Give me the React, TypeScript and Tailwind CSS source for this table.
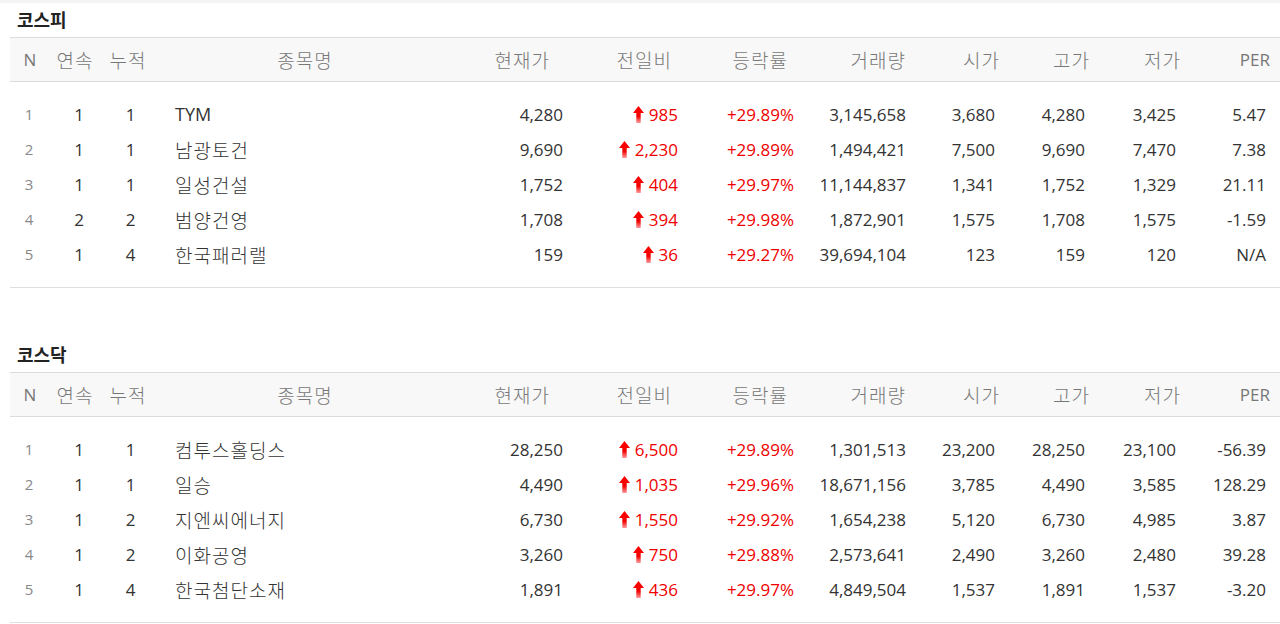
import React from "react";

type Row = {
  n: number;
  a: number;
  b: number;
  name: string;
  price: string;
  diff: string;
  rate: string;
  vol: string;
  open: string;
  high: string;
  low: string;
  per: string;
};

const kospi: Row[] = [
  { n: 1, a: 1, b: 1, name: "TYM", price: "4,280", diff: "985", rate: "+29.89%", vol: "3,145,658", open: "3,680", high: "4,280", low: "3,425", per: "5.47" },
  { n: 2, a: 1, b: 1, name: "남광토건", price: "9,690", diff: "2,230", rate: "+29.89%", vol: "1,494,421", open: "7,500", high: "9,690", low: "7,470", per: "7.38" },
  { n: 3, a: 1, b: 1, name: "일성건설", price: "1,752", diff: "404", rate: "+29.97%", vol: "11,144,837", open: "1,341", high: "1,752", low: "1,329", per: "21.11" },
  { n: 4, a: 2, b: 2, name: "범양건영", price: "1,708", diff: "394", rate: "+29.98%", vol: "1,872,901", open: "1,575", high: "1,708", low: "1,575", per: "-1.59" },
  { n: 5, a: 1, b: 4, name: "한국패러랠", price: "159", diff: "36", rate: "+29.27%", vol: "39,694,104", open: "123", high: "159", low: "120", per: "N/A" },
];

const kosdaq: Row[] = [
  { n: 1, a: 1, b: 1, name: "컴투스홀딩스", price: "28,250", diff: "6,500", rate: "+29.89%", vol: "1,301,513", open: "23,200", high: "28,250", low: "23,100", per: "-56.39" },
  { n: 2, a: 1, b: 1, name: "일승", price: "4,490", diff: "1,035", rate: "+29.96%", vol: "18,671,156", open: "3,785", high: "4,490", low: "3,585", per: "128.29" },
  { n: 3, a: 1, b: 2, name: "지엔씨에너지", price: "6,730", diff: "1,550", rate: "+29.92%", vol: "1,654,238", open: "5,120", high: "6,730", low: "4,985", per: "3.87" },
  { n: 4, a: 1, b: 2, name: "이화공영", price: "3,260", diff: "750", rate: "+29.88%", vol: "2,573,641", open: "2,490", high: "3,260", low: "2,480", per: "39.28" },
  { n: 5, a: 1, b: 4, name: "한국첨단소재", price: "1,891", diff: "436", rate: "+29.97%", vol: "4,849,504", open: "1,537", high: "1,891", low: "1,537", per: "-3.20" },
];

const grid =
  "grid grid-cols-[40px_54px_51px_300px_115px_115px_115px_112px_90px_90px_91px_97px]";

const ko = "text-[19px] font-light tracking-[1px] pt-[3px]";

function UpArrow() {
  return (
    <svg width="11" height="17" viewBox="0 0 11 17" className="mr-[5px] shrink-0">
      <defs>
        <linearGradient id="ag" x1="0" y1="0" x2="0" y2="1">
          <stop offset="0" stopColor="#ff0000" />
          <stop offset="0.6" stopColor="#f20000" />
          <stop offset="1" stopColor="#ff9a9a" />
        </linearGradient>
      </defs>
      <path d="M5.5 0 L11 7 L7.7 7 L7.7 17 L3.3 17 L3.3 7 L0 7 Z" fill="url(#ag)" />
    </svg>
  );
}

function Section({ title, rows }: { title: string; rows: Row[] }) {
  return (
    <div>
      <div className="h-[34px] flex items-center pl-[17px] text-[18px] font-bold text-[#222]">
        {title}
      </div>
      <div className="ml-[10px] border-b border-[#dedede]">
        <div
          className={`${grid} h-[45px] items-center bg-[#f8f8f8] border-t border-b border-[#dcdcdc] text-[17px] text-[#777]`}
        >
          <div className="text-center">N</div>
          <div className={`text-center pr-[4px] ${ko}`}>연속</div>
          <div className={`text-center pr-[3px] ${ko}`}>누적</div>
          <div className={`text-center ${ko}`}>종목명</div>
          <div className={`text-right pr-[20px] ${ko}`}>현재가</div>
          <div className={`text-right pr-[13px] ${ko}`}>전일비</div>
          <div className={`text-right pr-[12px] ${ko}`}>등락률</div>
          <div className={`text-right pr-[6px] ${ko}`}>거래량</div>
          <div className={`text-right pr-[2px] ${ko}`}>시가</div>
          <div className={`text-right pr-[2px] ${ko}`}>고가</div>
          <div className={`text-right pr-[2px] ${ko}`}>저가</div>
          <div className="text-right pr-[10px]">PER</div>
        </div>
        <div className="py-[15px]">
          {rows.map((r) => (
            <div key={r.n} className={`${grid} h-[35px] items-center text-[17px] text-[#333]`}>
              <div className="text-center text-[15px] text-[#888] pr-[2px]">{r.n}</div>
              <div className="text-center pl-[4px]">{r.a}</div>
              <div className="text-center pl-[2px]">{r.b}</div>
              <div className={`pl-[20px] text-[#333] ${/^[A-Z]/.test(r.name) ? "text-[18px]" : ko}`}>
                {r.name}
              </div>
              <div className="text-right pr-[7px]">{r.price}</div>
              <div className="flex items-center justify-end pr-[7px] text-[#ee0000]">
                <UpArrow />
                <span>{r.diff}</span>
              </div>
              <div className="text-right pr-[6px] text-[#ee0000]">{r.rate}</div>
              <div className="text-right pr-[6px]">{r.vol}</div>
              <div className="text-right pr-[7px]">{r.open}</div>
              <div className="text-right pr-[7px]">{r.high}</div>
              <div className="text-right pr-[7px]">{r.low}</div>
              <div className="text-right pr-[14px]">{r.per}</div>
            </div>
          ))}
        </div>
      </div>
    </div>
  );
}

export default function App() {
  return (
    <div
      className="w-[1280px] h-[624px] overflow-hidden bg-white"
      style={{ fontFamily: '"Open Sans", "Noto Sans CJK KR", sans-serif' }}
    >
      <div className="h-[3px] bg-[#f4f4f4]" />
      <Section title="코스피" rows={kospi} />
      <div className="h-[50px]" />
      <Section title="코스닥" rows={kosdaq} />
    </div>
  );
}
